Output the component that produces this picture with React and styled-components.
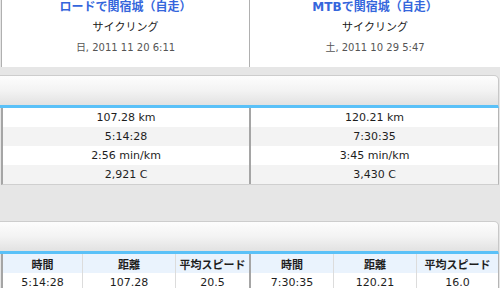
import styled, { createGlobalStyle } from 'styled-components';

const GlobalStyle = createGlobalStyle`
  html, body {
    margin: 0;
    padding: 0;
    background: #e6e6e6;
  }
  body {
    font-family: "DejaVu Sans", "Noto Sans CJK JP", sans-serif;
    color: #222;
  }
`;

const activities = [
  {
    title: 'ロードで関宿城（自走）',
    type: 'サイクリング',
    date: '日, 2011 11 20 6:11',
    distance: '107.28 km',
    time: '5:14:28',
    pace: '2:56 min/km',
    calories: '2,921 C',
    speed: '20.5',
    plainDistance: '107.28',
  },
  {
    title: 'MTBで関宿城（自走）',
    type: 'サイクリング',
    date: '土, 2011 10 29 5:47',
    distance: '120.21 km',
    time: '7:30:35',
    pace: '3:45 min/km',
    calories: '3,430 C',
    speed: '16.0',
    plainDistance: '120.21',
  },
];

const summaryKeys = ['distance', 'time', 'pace', 'calories'];

// column widths of the lap tables, per side
const lapCols = ['80px 93px 1fr', '83px 83px 1fr'];

const App = () => {
  return (
    <Page>
      <GlobalStyle />
      <CardRow>
        {activities.map((a, i) => (
          <Card key={a.title} $first={i === 0}>
            <Title>{a.title}</Title>
            <SportType>{a.type}</SportType>
            <DateText>{a.date}</DateText>
          </Card>
        ))}
      </CardRow>

      <SectionBar />
      <Table>
        {summaryKeys.map((key, i) => (
          <SummaryRow key={key} $alt={i % 2 === 1}>
            {activities.map((a, j) => (
              <Cell key={a.title} $divider={j === 0}>{a[key]}</Cell>
            ))}
          </SummaryRow>
        ))}
      </Table>

      <SectionBar $gap />
      <Table $open>
        <SummaryRow $head>
          {activities.map((a, j) => (
            <SplitCell key={a.title} $divider={j === 0} $cols={lapCols[j]}>
              <SubCell $line>時間</SubCell>
              <SubCell $line>距離</SubCell>
              <SubCell>平均スピード</SubCell>
            </SplitCell>
          ))}
        </SummaryRow>
        <SummaryRow>
          {activities.map((a, j) => (
            <SplitCell key={a.title} $divider={j === 0} $cols={lapCols[j]}>
              <SubCell $line>{a.time}</SubCell>
              <SubCell $line>{a.plainDistance}</SubCell>
              <SubCell>{a.speed}</SubCell>
            </SplitCell>
          ))}
        </SummaryRow>
      </Table>
    </Page>
  );
};

export default App;

const Page = styled.div`
  width: 500px;
  height: 288px;
  overflow: hidden;
  background: #e6e6e6;
`;

const CardRow = styled.div`
  display: grid;
  grid-template-columns: 249px 1fr;
  padding-left: 1px;
  height: 67px;
`;

const Card = styled.div`
  background: #fff;
  display: flex;
  flex-direction: column;
  align-items: center;
  border-left: ${p => (p.$first ? '1px solid #b0b0b0' : 'none')};
  border-right: ${p => (p.$first ? '1px solid #b0b0b0' : 'none')};
`;

const Title = styled.div`
  margin-top: 0;
  font-size: 12px;
  line-height: 15px;
  font-weight: bold;
  color: #3566dc;
`;

const SportType = styled.div`
  margin-top: 6px;
  font-size: 11px;
  line-height: 14px;
  color: #1a1a1a;
`;

const DateText = styled.div`
  margin-top: 6px;
  font-size: 10px;
  line-height: 14px;
  color: #555;
`;

const SectionBar = styled.div`
  margin-top: ${p => (p.$gap ? '36px' : '8px')};
  margin-left: -1px;
  width: 499px;
  height: 29px;
  box-sizing: content-box;
  border-top: 1px solid #cdcdcd;
  border-right: 1px solid #c8c8c8;
  border-bottom: 3px solid #5ac1f8;
  border-top-right-radius: 5px;
  background: linear-gradient(to bottom, #fdfdfd 0%, #f3f3f3 50%, #e2e2e2 100%);
`;

const Table = styled.div`
  margin-left: 1px;
  width: 498px;
  box-sizing: border-box;
  border-left: 2px solid #a5a5a5;
  border-right: 1px solid #b5b5b5;
  border-bottom: ${p => (p.$open ? 'none' : '1px solid #cfcfcf')};
`;

const SummaryRow = styled.div`
  display: grid;
  grid-template-columns: 248px 1fr;
  height: 19px;
  background: ${p => (p.$head ? '#eaf3fd' : p.$alt ? '#f3f3f3' : '#fff')};
  font-weight: ${p => (p.$head ? 'bold' : 'normal')};
`;

const Cell = styled.div`
  display: flex;
  align-items: center;
  justify-content: center;
  font-size: 11px;
  color: #1e1e1e;
  border-right: ${p => (p.$divider ? '2px solid #a5a5a5' : 'none')};
`;

const SplitCell = styled.div`
  display: grid;
  grid-template-columns: ${p => p.$cols};
  border-right: ${p => (p.$divider ? '2px solid #a5a5a5' : 'none')};
`;

const SubCell = styled.div`
  display: flex;
  align-items: center;
  justify-content: center;
  font-size: 11px;
  color: #1e1e1e;
  border-right: ${p => (p.$line ? '1px solid #dcdcdc' : 'none')};
`;
